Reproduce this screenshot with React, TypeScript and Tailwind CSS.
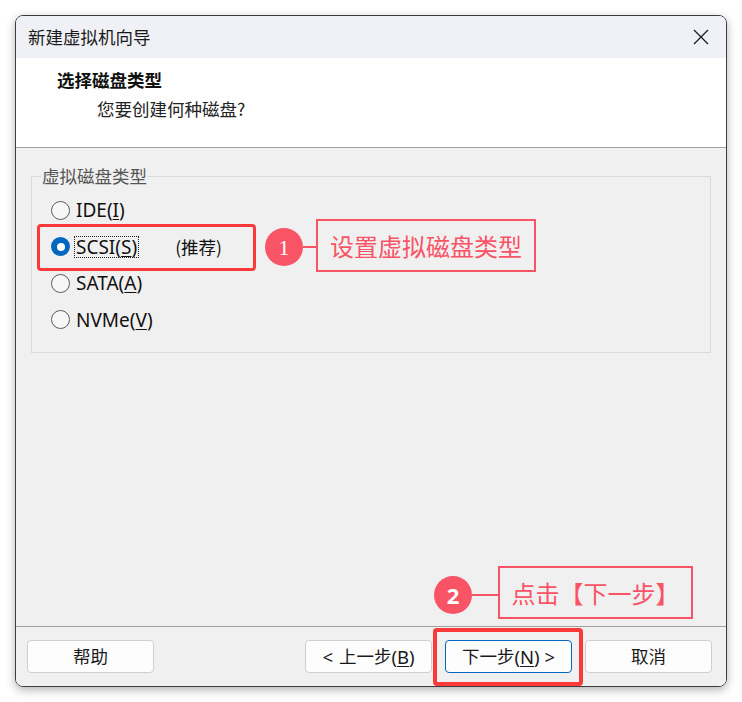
const cjk = "font-['Noto_Sans_CJK_SC',sans-serif]";
const latin = "font-['Noto_Sans','Noto_Sans_CJK_SC',sans-serif]";

const Radio = ({ checked }: { checked?: boolean }) =>
  checked ? (
    <span className="flex h-[19px] w-[19px] shrink-0 items-center justify-center rounded-full bg-[#0067c0]">
      <span className="h-[8px] w-[8px] rounded-full bg-white" />
    </span>
  ) : (
    <span className="h-[19px] w-[19px] shrink-0 rounded-full border border-[#5c5c5c] bg-[#f7f7f7]" />
  );

const Btn = ({ children, primary }: { children: React.ReactNode; primary?: boolean }) => (
  <button
    className={
      primary
        ? "flex h-[33px] w-[127px] items-center justify-center rounded-[4px] border border-[#0067c0] bg-[#fdfdfd] text-[18.5px] text-[#1a1a1a]"
        : "flex h-[33px] w-[127px] items-center justify-center rounded-[4px] border border-[#cfcfcf] bg-[#fdfdfd] text-[18.5px] text-[#1a1a1a]"
    }
  >
    {children}
  </button>
);

export default function App() {
  return (
    <div className={`relative h-[702px] w-[742px] bg-white pl-[15px] pt-[15px] ${latin}`}>
      {/* dialog window */}
      <div className="flex h-[672px] w-[712px] flex-col overflow-hidden rounded-lg border border-[#3d3d3d] shadow-[0_3px_10px_rgba(0,0,0,0.3)]">
        {/* title bar */}
        <div className="flex h-[42px] shrink-0 items-center justify-between bg-[#eff1f6] pl-[12px] pr-[17px]">
          <span className={`text-[17.5px] text-[#1a1a1a] ${cjk}`}>新建虚拟机向导</span>
          <svg width="16" height="16" viewBox="0 0 16 16" stroke="#1a1a1a" strokeWidth="1.3">
            <path d="M1 1L15 15M15 1L1 15" />
          </svg>
        </div>

        {/* header */}
        <div className={`h-[90px] shrink-0 border-b border-[#a0a0a0] bg-white pt-[9px] ${cjk}`}>
          <div className="pl-[41px] text-[17.5px] font-bold leading-[26px] text-[#111]">选择磁盘类型</div>
          <div className="pl-[81px] pt-[3px] text-[17.5px] leading-[26px] text-[#222]">您要创建何种磁盘?</div>
        </div>

        {/* body */}
        <div className="flex-1 bg-[#f0f0f0] px-[15px] pt-[16px]">
          <fieldset className="border border-[#dadada] px-[9px] pb-[14px]">
            <legend className={`px-[1px] text-[17.5px] leading-[24px] text-[#555] ${cjk}`}>虚拟磁盘类型</legend>
            <div className="mt-[4px] flex flex-col pl-[10px] text-[19px] text-[#111]">
              <div className="flex h-[36.5px] items-center gap-[6px]">
                <Radio />
                <span>
                  IDE(<span className="underline underline-offset-2">I</span>)
                </span>
              </div>
              <div className="flex h-[36.5px] items-center gap-[4px]">
                <Radio checked />
                <span className="border border-dotted border-[#222] px-[1px] leading-[20px]">
                  SCSI(<span className="underline underline-offset-2">S</span>)
                </span>
                <span className={`ml-[32px] text-[17.5px] ${cjk}`}>(推荐)</span>
              </div>
              <div className="flex h-[36.5px] items-center gap-[6px]">
                <Radio />
                <span>
                  SATA(<span className="underline underline-offset-2">A</span>)
                </span>
              </div>
              <div className="flex h-[36.5px] items-center gap-[6px]">
                <Radio />
                <span>
                  NVMe(<span className="underline underline-offset-2">V</span>)
                </span>
              </div>
            </div>
          </fieldset>
        </div>

        {/* footer */}
        <div className="flex h-[60px] shrink-0 items-start border-t border-[#a0a0a0] bg-[#f0f0f0] pl-[11px] pr-[14px] pt-[13px]">
          <Btn>
            <span className={`text-[17.5px] ${cjk}`}>帮助</span>
          </Btn>
          <div className="ml-auto flex gap-[13px]">
            <Btn>
              &lt; <span className={`ml-[6px] text-[17.5px] ${cjk}`}>上一步</span>(<span className="underline underline-offset-2">B</span>)
            </Btn>
            <Btn primary>
              <span className={`text-[17.5px] ${cjk}`}>下一步</span>(<span className="underline underline-offset-2">N</span>) &gt;
            </Btn>
            <Btn>
              <span className={`text-[17.5px] ${cjk}`}>取消</span>
            </Btn>
          </div>
        </div>
      </div>

      {/* annotation 1 */}
      <div className="absolute left-[37px] top-[224px] h-[47px] w-[219px] rounded-[4px] border-[3px] border-[#fa3a3a]" />
      <div className="absolute left-[265px] top-[228px] flex h-[38px] w-[38px] items-center justify-center rounded-full bg-[#f95366] font-['Liberation_Serif',serif] text-[22px] text-white">
        1
      </div>
      <div className="absolute left-[303px] top-[246px] h-[2px] w-[13px] bg-[#f95366]" />
      <div className={`absolute left-[316px] top-[219px] flex h-[53px] w-[220px] items-center justify-center border-2 border-[#f95366] bg-[#f0f0f0] text-[24px] text-[#f95366] ${cjk}`}>
        设置虚拟磁盘类型
      </div>

      {/* annotation 2 */}
      <div className="absolute left-[433px] top-[628px] h-[58px] w-[150px] rounded-[4px] border-[4px] border-[#fa3a3a]" />
      <div className="absolute left-[434px] top-[576px] flex h-[38px] w-[38px] items-center justify-center rounded-full bg-[#f95366] text-[22px] font-bold text-white">
        2
      </div>
      <div className="absolute left-[472px] top-[594px] h-[2px] w-[26px] bg-[#f95366]" />
      <div className={`absolute left-[498px] top-[566px] flex h-[53px] w-[195px] items-center justify-center border-2 border-[#f95366] bg-[#f0f0f0] text-[24px] text-[#f95366] ${cjk}`}>
        点击【下一步】
      </div>
    </div>
  );
}
